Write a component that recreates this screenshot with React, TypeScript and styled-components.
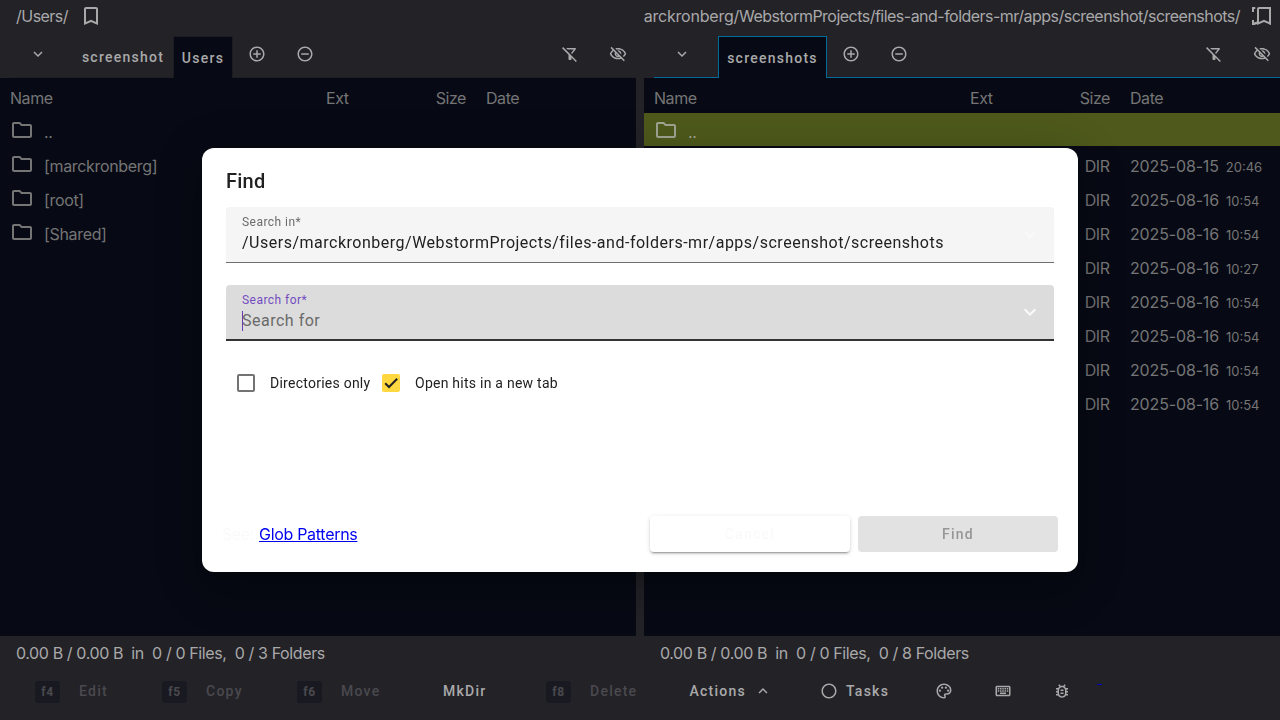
import React from 'react';
import styled, { createGlobalStyle, css } from 'styled-components';
import {
  MdOutlineFilterAltOff, MdOutlineVisibilityOff, MdAddCircleOutline, MdRemoveCircleOutline,
  MdExpandMore, MdExpandLess, MdOutlineFolder, MdOutlinePalette, MdOutlineKeyboard,
  MdOutlineBugReport, MdRadioButtonUnchecked, MdBookmarkBorder,
} from 'react-icons/md';

const GlobalStyle = createGlobalStyle`
  * { box-sizing: border-box; }
  body { margin: 0; background: #232227; overflow: hidden; }
  svg { display: block; flex: none; }
`;

const ui = css`
  font-family: Inter, 'Liberation Sans', sans-serif;
  font-size: 16px;
  font-weight: 400;
  letter-spacing: -0.45px;
  white-space: pre;
`;
const material = css`
  font-family: Roboto, 'Liberation Sans', sans-serif;
  white-space: pre;
`;

const Shell = styled.div`
  width: 1280px;
  height: 720px;
  display: flex;
  flex-direction: column;
  background: #232227;
  color: #a9a9aa;
  overflow: hidden;
`;
const Panels = styled.div`
  display: grid;
  grid-template-columns: 636px 636px;
  column-gap: 8px;
  height: 672px;
`;
const Panel = styled.section`
  display: grid;
  grid-template-rows: 36px 42px 558px 36px;
  min-width: 0;
`;
const PathBar = styled.div<{ $end?: boolean }>`
  ${ui}
  display: flex;
  align-items: center;
  height: 32px;
  overflow: hidden;
  justify-content: ${p => (p.$end ? 'flex-end' : 'flex-start')};
  padding: ${p => (p.$end ? '0 8px 0 0' : '0 0 0 16px')};
`;
const PathText = styled.span`
  flex: none;
  letter-spacing: -0.52px;
`;
const HomeSegment = styled.span`letter-spacing: -0.22px;`;
const MarkSlot = styled.span<{ $gap: number }>`
  display: flex;
  margin-left: ${p => p.$gap}px;
`;
const TabRow = styled.div<{ $line: string }>`
  display: flex;
  align-items: flex-start;
  margin-left: 10px;
  box-shadow: inset 0 -1px ${p => p.$line};
`;
const IconButton = styled.span<{ $w: number }>`
  display: flex;
  justify-content: center;
  align-items: center;
  width: ${p => p.$w}px;
  height: 36px;
  font-size: 18px;
`;
const Tab = styled.span<{ $w: number; $active?: boolean; $line?: string }>`
  ${material}
  display: flex;
  align-items: center;
  justify-content: center;
  width: ${p => p.$w}px;
  height: 42px;
  font-size: 14px;
  font-weight: 500;
  letter-spacing: 1.25px;
  ${p => (p.$active ? css`
    padding-top: 1px;
    background: #070a14;
    border: 1px solid ${p.$line};
    border-bottom: 0;
  ` : css`padding-left: 7px;`)}
`;
const Spacer = styled.span`flex: 1;`;
const Table = styled.div`
  background: #070a14;
  color: #757576;
`;
const cols = css`
  ${ui}
  display: grid;
  grid-template-columns: 316px 80px 60px 20px 1fr;
  padding-left: 10px;
  align-items: center;
`;
const HeadRow = styled.div`
  ${cols}
  height: 35px;
  padding-top: 5px;
`;
const Row = styled.div<{ $selected?: boolean }>`
  ${cols}
  height: 34px;
  border-bottom: 1px solid #070a14;
  background: ${p => (p.$selected ? '#4e591b' : 'transparent')};
  color: ${p => (p.$selected ? '#a0a391' : '#757576')};
`;
const NameCell = styled.span`
  display: flex;
  align-items: center;
  gap: 10px;
  letter-spacing: -0.33px;
`;
const Shift = styled.span`padding-top: 4px;`;
const SizeCell = styled.span`
  grid-column: 3;
  text-align: right;
  padding: 4px 0.5px 0 0;
`;
const HeadSize = styled.span`
  text-align: right;
`;
const DateCell = styled.span`
  grid-column: 5;
  padding-top: 4px;
  letter-spacing: -0.15px;
`;
const Time = styled.small`
  font-size: 13px;
  margin-left: 7px;
  letter-spacing: 0;
`;
const Status = styled.div`
  ${ui}
  padding: 0 16px;
  line-height: 35px;
  letter-spacing: -0.385px;
`;
const Toolbar = styled.footer`
  display: flex;
  align-items: center;
  height: 38px;
  padding-left: 35px;
`;
const Action = styled.span<{ $w: number; $off?: boolean }>`
  ${material}
  display: flex;
  align-items: center;
  width: ${p => p.$w}px;
  height: 38px;
  font-size: 14px;
  font-weight: 500;
  letter-spacing: 1.25px;
  color: ${p => (p.$off ? '#4a494e' : '#a9a9aa')};
  svg { font-size: 18px; }
`;
const Key = styled.kbd`
  display: flex;
  align-items: center;
  justify-content: center;
  width: 25px;
  height: 22px;
  margin: 1px 19px 0 0;
  border-radius: 3px;
  background: #191a21;
  font: 700 12px Roboto, sans-serif;
  letter-spacing: 0.6px;
`;
const TaskRing = styled(MdRadioButtonUnchecked)`margin-right: 8px;`;
const EmptyLink = styled.a`
  width: 5px;
  height: 1px;
  margin: -13px 0 0 -4px;
  background: #0000c0;
`;
const Overlay = styled.div`
  position: fixed;
  inset: 0;
  display: flex;
  align-items: center;
  justify-content: center;
`;
const Dialog = styled.div`
  ${material}
  display: flex;
  flex-direction: column;
  width: 876px;
  height: 424px;
  padding: 19px 24px 20px;
  border-radius: 12px;
  background: #fff;
  color: #212121;
  box-shadow: 0 11px 15px -7px rgba(0,0,0,.2), 0 24px 38px 3px rgba(0,0,0,.14), 0 9px 46px 8px rgba(0,0,0,.12);
`;
const Title = styled.h2`
  margin: 0;
  height: 40px;
  font-size: 20px;
  line-height: 28px;
  font-weight: 500;
  letter-spacing: 0.25px;
`;
const Field = styled.div<{ $focus?: boolean }>`
  display: flex;
  align-items: center;
  justify-content: space-between;
  height: 56px;
  padding: 0 12px 0 16px;
  margin-bottom: 22px;
  border-radius: 4px 4px 0 0;
  background: ${p => (p.$focus ? '#dcdcdc' : '#f5f5f5')};
  box-shadow: inset 0 ${p => (p.$focus ? '-2px #333' : '-1px #6f6f6f')};
  svg { font-size: 24px; color: ${p => (p.$focus ? '#fafafa' : '#f9f9f9')}; margin-top: -2px; width: 24px; }
`;
const FieldBody = styled.div`
  display: flex;
  flex-direction: column;
  height: 56px;
  padding-top: 7px;
`;
const Label = styled.label<{ $focus?: boolean }>`
  font-size: 12px;
  line-height: 16px;
  letter-spacing: 0.46px;
  height: 19px;
  color: ${p => (p.$focus ? '#744cc0' : '#6b6b6b')};
`;
const Value = styled.span<{ $placeholder?: boolean }>`
  font-size: 16px;
  line-height: 20px;
  letter-spacing: 0.505px;
  color: ${p => (p.$placeholder ? '#6a6a6a' : '#212121')};
  box-shadow: ${p => (p.$placeholder ? 'inset 1px 0 #673ab7' : 'none')};
`;
const Checks = styled.div`
  display: flex;
  align-items: center;
  height: 40px;
  padding-left: 11px;
  font-size: 14px;
`;
const Box = styled.span<{ $on?: boolean }>`
  display: flex;
  width: 18px;
  height: 18px;
  align-items: center;
  justify-content: center;
  border-radius: 2px;
  border: ${p => (p.$on ? '0' : '2px solid #737373')};
  background: ${p => (p.$on ? '#ffd740' : 'transparent')};
`;
const CheckText = styled.span<{ $w: number }>`
  width: ${p => p.$w}px;
  margin-left: 15px;
  letter-spacing: 0.25px;
`;
const Footer = styled.div`
  display: flex;
  align-items: center;
  margin: auto -4px 0;
  height: 36px;
`;
const See = styled.span`
  ${ui}
  width: 37px;
  color: #fafafa;
`;
const Glob = styled.a`
  ${ui}
  letter-spacing: -0.3px;
  color: #0000ee;
  text-decoration: underline;
`;
const Button = styled.button<{ $disabled?: boolean }>`
  ${material}
  width: 200px;
  height: 36px;
  margin-left: 8px;
  padding: 0;
  border: 0;
  border-radius: 4px;
  font-size: 14px;
  font-weight: 500;
  letter-spacing: 1.25px;
  background: ${p => (p.$disabled ? '#e2e2e2' : '#fff')};
  color: ${p => (p.$disabled ? '#969696' : '#fafafa')};
  box-shadow: ${p => (p.$disabled ? 'none' : '0 3px 1px -2px rgba(0,0,0,.2), 0 2px 2px rgba(0,0,0,.14), 0 1px 5px rgba(0,0,0,.12)')};
`;

const CheckMark = () => (
  <svg width="18" height="18" viewBox="0 0 18 18" fill="none" stroke="#212121" strokeWidth="2">
    <path d="M3.200 9.200 7 13 15.200 4.800" />
  </svg>
);

const DoubleBookmark = () => (
  <svg width="20" height="20" viewBox="0 0 20 20" fill="currentColor">
    <path d="M0 1H3.300V3H2V6H0ZM0 14H2V16.500L5 15.500V18L2.500 19H0Z" />
    <path d="M17 1H7c-1.100 0-2 .9-2 2v16l7-3 7 3V3c0-1.100-.9-2-2-2zm0 15-5-2.180L7 16V3h10v13z" />
    <path d="M17 1h2v18l-2-1z" />
  </svg>
);

type Entry = { name: string; date?: string; time?: string };
type PanelProps = { right?: boolean; files: Entry[]; folders: number; children: React.ReactNode; path: React.ReactNode };

const FilePanel = ({ right, files, folders, children, path }: PanelProps) => (
  <Panel>
    <PathBar $end={right}>{path}</PathBar>
    <TabRow $line={right ? '#006c99' : '#1e1e23'}>
      <IconButton $w={56}><MdExpandMore size={18} /></IconButton>
      {children}
      <IconButton $w={47}><MdAddCircleOutline /></IconButton>
      <IconButton $w={49}><MdRemoveCircleOutline /></IconButton>
      <Spacer />
      <IconButton $w={60}><MdOutlineFilterAltOff /></IconButton>
      <IconButton $w={36}><MdOutlineVisibilityOff /></IconButton>
    </TabRow>
    <Table>
      <HeadRow><span>Name</span><span>Ext</span><HeadSize>Size</HeadSize><i /><span>Date</span></HeadRow>
      {files.map((f, i) => (
        <Row key={i} $selected={right && i === 0}>
          <NameCell><MdOutlineFolder size={24} /><Shift>{f.name}</Shift></NameCell>
          {f.date && <><SizeCell>DIR</SizeCell><DateCell>{f.date}<Time>{f.time}</Time></DateCell></>}
        </Row>
      ))}
    </Table>
    <Status>{`0.00 B / 0.00 B  in  0 / 0 Files,  0 / ${folders} Folders`}</Status>
  </Panel>
);

const leftFiles: Entry[] = ['..', '[marckronberg]', '[root]', '[Shared]'].map(name => ({ name }));
const times = ['20:46', '10:54', '10:54', '10:27', '10:54', '10:54', '10:54', '10:54'];
const rightFiles: Entry[] = [
  { name: '..' },
  ...times.map((time, i) => ({ name: '', date: i ? '2025-08-16' : '2025-08-15', time })),
];

export default function App() {
  return (
    <>
      <GlobalStyle />
      <Shell>
        <Panels>
          <FilePanel files={leftFiles} folders={3}
            path={<><PathText>/Users/</PathText><MarkSlot $gap={11}><MdBookmarkBorder size={24} /></MarkSlot></>}>
            <Tab $w={107}>screenshot</Tab>
            <Tab $w={60} $active $line="#1b1c22">Users</Tab>
          </FilePanel>
          <FilePanel right files={rightFiles} folders={8}
            path={<>
              <PathText>/Users/<HomeSegment>marckronberg/</HomeSegment>WebstormProjects/files-and-folders-mr/apps/screenshot/screenshots/</PathText>
              <MarkSlot $gap={12}><DoubleBookmark /></MarkSlot>
            </>}>
            <IconButton $w={8} />
            <Tab $w={109} $active $line="#006c99">screenshots</Tab>
          </FilePanel>
        </Panels>
        <Toolbar>
          <Action $w={127} $off><Key>f4</Key>Edit</Action>
          <Action $w={135} $off><Key>f5</Key>Copy</Action>
          <Action $w={146} $off><Key>f6</Key>Move</Action>
          <Action $w={103}>MkDir</Action>
          <Action $w={143.5} $off><Key>f8</Key>Delete</Action>
          <Action $w={130.5}>Actions<IconButton $w={34}><MdExpandLess /></IconButton></Action>
          <Action $w={115}><TaskRing />Tasks</Action>
          <Action $w={59}><MdOutlinePalette /></Action>
          <Action $w={59}><MdOutlineKeyboard /></Action>
          <Action $w={48}><MdOutlineBugReport /></Action>
          <EmptyLink />
        </Toolbar>
      </Shell>
      <Overlay>
        <Dialog>
          <Title>Find</Title>
          <Field>
            <FieldBody>
              <Label>Search in*</Label>
              <Value>/Users/marckronberg/WebstormProjects/files-and-folders-mr/apps/screenshot/screenshots</Value>
            </FieldBody>
            <MdExpandMore />
          </Field>
          <Field $focus>
            <FieldBody>
              <Label $focus>Search for*</Label>
              <Value $placeholder>Search for</Value>
            </FieldBody>
            <MdExpandMore />
          </Field>
          <Checks>
            <Box /><CheckText $w={112}>Directories only</CheckText>
            <Box $on><CheckMark /></Box><CheckText $w={160}>Open hits in a new tab</CheckText>
          </Checks>
          <Footer>
            <See>See: </See><Glob>Glob Patterns</Glob>
            <Spacer />
            <Button>Cancel</Button>
            <Button $disabled>Find</Button>
          </Footer>
        </Dialog>
      </Overlay>
    </>
  );
}
